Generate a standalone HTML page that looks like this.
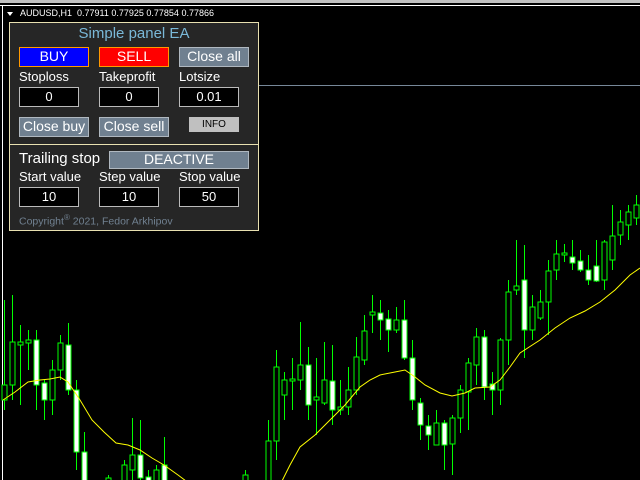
<!DOCTYPE html>
<html><head><meta charset="utf-8"><style>
*{margin:0;padding:0;box-sizing:border-box}
body{width:640px;height:480px;background:#000;position:relative;overflow:hidden;font-family:"Liberation Sans",sans-serif}
.a{position:absolute}
.btn{position:absolute;color:#fff;font-size:14px;text-align:center;line-height:17px;border:1px solid #aaa}
.g{background:#708090;border-color:#b0b8c0}
.lbl{position:absolute;color:#fff;font-size:13px}
.in{position:absolute;background:#000;border:1px solid #bbb;color:#fff;font-size:13px;text-align:center;line-height:17px;height:20px;width:60px}
</style></head><body>
<div class="a" style="left:0;top:0;width:640px;height:3px;background:#c0c0c0"></div>
<div class="a" style="left:0;top:5px;width:640px;height:1px;background:#fff"></div>
<div class="a" style="left:2px;top:5px;width:1px;height:475px;background:#fff"></div>
<div class="a" style="left:258px;top:85px;width:382px;height:1px;background:#778899"></div>
<svg class="a" style="left:0;top:0" width="640" height="480">
<polygon points="7,12 13,12 10,16" fill="#fff"/>
<g id="c"></g>
<polyline fill="none" stroke="#ffff00" stroke-width="1" points="3,400 15,392 28,382 40,380 50,379 60,377 68,382 80,400 92,420 104,432 116,443 128,445 140,450 152,458 164,465 178,475 186,481"/>
<polyline fill="none" stroke="#ffff00" stroke-width="1" points="282,481 290,465 300,447 315,435 330,420 345,405 360,387 370,380 380,375 395,372 405,370 415,377 425,385 440,393 452,396 465,393 475,388 490,387 500,380 510,367 520,353 540,340 555,328 570,318 585,311 600,302 615,290 630,275 640,268"/>
</svg>
<div class="a" style="left:20px;top:8px;color:#fff;font-size:9px;white-space:nowrap">AUDUSD,H1&nbsp; 0.77911 0.77925 0.77854 0.77866</div>
<div class="a" style="left:9px;top:22px;width:250px;height:209px;background:#262626;border:1px solid #e8e0b0"></div>
<div class="a" style="left:9px;top:144px;width:250px;height:1px;background:#e8e0b0"></div>
<div class="a" style="left:9px;top:25px;width:250px;text-align:center;color:#7ab8d8;font-size:15px">Simple panel EA</div>
<div class="btn" style="left:19px;top:47px;width:70px;height:20px;background:#0000ff;border-color:#f90">BUY</div>
<div class="btn" style="left:99px;top:47px;width:70px;height:20px;background:#ff0000;border-color:#f90">SELL</div>
<div class="btn g" style="left:179px;top:47px;width:70px;height:20px">Close all</div>
<div class="lbl" style="left:19px;top:69px">Stoploss</div>
<div class="lbl" style="left:99px;top:69px">Takeprofit</div>
<div class="lbl" style="left:179px;top:69px">Lotsize</div>
<div class="in" style="left:19px;top:87px">0</div>
<div class="in" style="left:99px;top:87px">0</div>
<div class="in" style="left:179px;top:87px">0.01</div>
<div class="btn g" style="left:19px;top:117px;width:70px;height:20px">Close buy</div>
<div class="btn g" style="left:99px;top:117px;width:70px;height:20px">Close sell</div>
<div class="btn" style="left:189px;top:117px;width:50px;height:15px;background:#c0c0c0;border-color:#c0c0c0;color:#000;font-size:10px;line-height:14px">INFO</div>
<div class="a" style="left:19px;top:150px;color:#fff;font-size:15px">Trailing stop</div>
<div class="btn g" style="left:109px;top:151px;width:140px;height:18px;line-height:15px">DEACTIVE</div>
<div class="lbl" style="left:19px;top:169px">Start value</div>
<div class="lbl" style="left:99px;top:169px">Step value</div>
<div class="lbl" style="left:179px;top:169px">Stop value</div>
<div class="in" style="left:19px;top:187px">10</div>
<div class="in" style="left:99px;top:187px">10</div>
<div class="in" style="left:179px;top:187px">50</div>
<div class="a" style="left:19px;top:213px;color:#708090;font-size:10.5px">Copyright<sup style="font-size:8px">®</sup> 2021, Fedor Arkhipov</div>
<script>
var d=[[4,300,410,385,400,0],[12,295,400,342,385,0],[20,325,405,342,345,0],[28,330,370,340,343,0],[36,330,410,340,385,1],[44,380,420,383,400,1],[52,360,415,370,400,0],[60,335,380,343,370,0],[68,323,395,345,390,1],[76,380,470,390,452,1],[84,432,482,452,482,1],[108,475,482,478,482,0],[124,460,482,465,482,0],[132,418,482,455,470,0],[140,420,482,455,478,1],[148,470,482,477,482,1],[156,465,482,470,482,0],[164,437,482,465,482,1],[245,470,482,475,482,0],[268,420,482,441,482,0],[276,350,460,367,441,0],[284,372,420,380,395,0],[292,358,410,379,381,0],[300,322,390,365,380,0],[308,347,420,365,405,1],[316,358,435,397,400,0],[324,342,405,380,403,0],[332,345,425,381,410,1],[340,380,415,407,410,0],[348,367,415,390,407,0],[356,337,395,357,390,0],[364,315,365,331,360,0],[372,295,333,312,315,0],[380,300,340,313,320,1],[388,310,352,319,330,1],[396,307,333,320,330,0],[404,300,360,320,358,1],[412,340,410,358,400,1],[420,398,440,403,425,1],[428,415,450,426,435,1],[436,410,440,423,445,0],[444,420,470,423,445,1],[452,415,475,418,444,0],[460,385,433,390,418,0],[468,358,430,363,392,0],[476,328,385,337,365,0],[484,330,400,337,387,1],[492,372,415,384,390,1],[500,338,405,340,390,0],[508,280,365,292,340,0],[516,240,295,286,290,0],[524,245,358,280,330,1],[532,295,340,307,330,0],[540,290,320,302,318,0],[548,260,335,271,302,0],[556,240,280,254,270,0],[564,244,262,253,255,0],[572,240,270,257,263,1],[580,250,272,261,270,1],[588,255,285,270,280,1],[596,240,282,266,281,1],[604,240,290,242,280,0],[612,205,270,236,260,0],[620,210,245,222,235,0],[628,205,240,212,225,0],[636,195,225,205,218,0]];
var s='';d.forEach(function(c){var x=c[0];s+='<line x1="'+(x+.5)+'" y1="'+c[1]+'" x2="'+(x+.5)+'" y2="'+c[2]+'" stroke="#00ff00"/>';s+='<rect x="'+(x-2)+'" y="'+c[3]+'" width="5" height="'+Math.max(1,c[4]-c[3])+'" fill="'+(c[5]?'#fff':'#000')+'" stroke="#00ff00"/>';});
document.getElementById('c').innerHTML=s;
</script>
</body></html>
